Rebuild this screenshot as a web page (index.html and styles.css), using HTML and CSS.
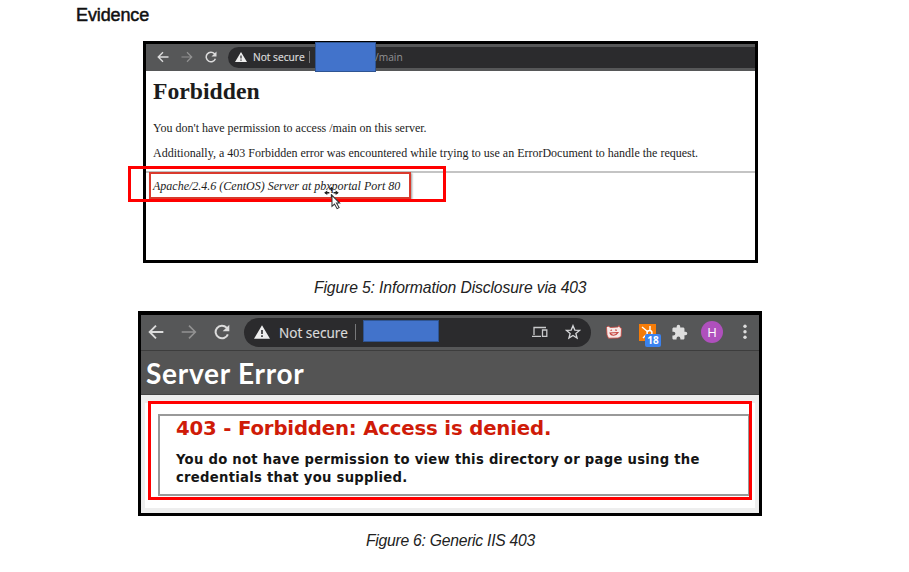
FILE: index.html
```html
<!DOCTYPE html>
<html lang="en">
<head>
<meta charset="utf-8">
<title>Evidence</title>
<link rel="stylesheet" href="styles.css">
</head>
<body>
<svg class="defs" width="0" height="0">
  <symbol id="back" viewBox="0 0 24 24"><path d="M23 12H3M12 2.500 2.500 12l9.500 9.500" fill="none" stroke="currentColor" stroke-width="2.800"/></symbol>
  <symbol id="forward" viewBox="0 0 24 24"><path d="M1 12h20M12 2.500 21.500 12 12 21.500" fill="none" stroke="currentColor" stroke-width="2.400"/></symbol>
  <symbol id="reload" viewBox="0 0 24 24"><path d="M20.800 15.500A9.500 9.500 0 1 1 18.900 5.500L21 7.700" fill="none" stroke="currentColor" stroke-width="3"/><path d="M23 1v10H13z" fill="currentColor"/></symbol>
  <symbol id="warning" viewBox="0 0 24 24"><path fill="currentColor" fill-rule="evenodd" d="M12 2 24 22H0zM10.800 9v6h2.400V9zm0 8v2.500h2.400V17z"/></symbol>
</svg>
<main class="page">
  <h2 class="title">Evidence</h2>

  <section class="shot shot-a">
    <div class="bar bar-a">
      <svg class="ic back"><use href="#back"/></svg>
      <svg class="ic forward"><use href="#forward"/></svg>
      <svg class="ic reload"><use href="#reload"/></svg>
      <div class="address">
        <svg class="ic warning"><use href="#warning"/></svg>
        <span class="secure">Not secure</span>
        <span class="divider"></span>
        <span class="redaction"></span>
        <span class="path">/main</span>
      </div>
    </div>
    <div class="content-a">
      <h1 class="forbidden">Forbidden</h1>
      <p class="denied">You don't have permission to access /main on this server.</p>
      <p class="additional">Additionally, a 403 Forbidden error was encountered while trying to use an ErrorDocument to handle the request.</p>
      <hr class="rule">
      <address class="signature">Apache/2.4.6 (CentOS) Server at pbxportal Port 80</address>
    </div>
    <div class="mark-inner"></div>
    <div class="mark-outer"></div>
    <svg class="cursor" viewBox="0 0 16 22">
      <path d="M7 .5v3.500M7 7v3M1 5.500h4M9 5.500h4" stroke="#222" stroke-width="1.200"/>
      <path d="M0 5.500 3 3.300v4.400zM14 5.500 11 3.300v4.400zM7 0 5 2h4z" fill="#222"/>
      <path d="M7.500 8v10.500l2.400-2.200 2.500 4.400 1.900-1-2.500-4.300h3z" fill="#fff" stroke="#333" stroke-width="1"/>
    </svg>
  </section>
  <p class="caption caption-a">Figure 5: Information Disclosure via 403</p>

  <section class="shot shot-b">
    <div class="bar bar-b">
      <svg class="ic back"><use href="#back"/></svg>
      <svg class="ic forward"><use href="#forward"/></svg>
      <svg class="ic reload"><use href="#reload"/></svg>
      <div class="address">
        <svg class="ic warning"><use href="#warning"/></svg>
        <span class="secure">Not secure</span>
        <span class="divider"></span>
        <span class="redaction"></span>
        <svg class="devices" viewBox="0 0 16 12"><path d="M2 9V1.500h12M0 10.300h9M10.500 4h4.300v6.300h-4.300z" fill="none" stroke="#c9cacc" stroke-width="1.300"/></svg>
        <svg class="star" viewBox="0 0 24 24"><path d="m12 2.500 2.700 6.600 7.100.5-5.500 4.600 1.800 6.900L12 17.300l-6.100 3.800 1.800-6.900-5.500-4.600 7.100-.5z" fill="none" stroke="#d5d6d8" stroke-width="2"/></svg>
      </div>
      <svg class="ext-cat" viewBox="0 0 16 14"><path d="M.5 2.500 2 1l2.500 1.500L12 2l1-1.500 1 2 1.500 1-.4 8-3 1.500-9.600.2L1 10z" fill="#f7e9e7" stroke="#c8443c" stroke-width=".8"/><path d="M4.500 5.500l1.500-.5M9 5l2 .3M4 8c1 3 6 3 8-.5z" fill="none" stroke="#c63f38" stroke-width="1.100"/></svg>
      <div class="ext-hub">
        <svg viewBox="0 0 17 17"><path d="M0 0h17v17H0z" fill="#f57c08"/><path d="m3 3 6 5M11 2v5M7 11l-3 3" stroke="#fff" stroke-width="1.400"/><circle cx="10.500" cy="9" r="2.500" fill="none" stroke="#fff" stroke-width="1.400"/></svg>
        <span class="count">18</span>
      </div>
      <svg class="puzzle" viewBox="0 0 24 24"><path fill="#dedede" d="M20.500 11H19V7c0-1.100-.9-2-2-2h-4V3.500a2.500 2.500 0 0 0-5 0V5H4c-1.100 0-2 .9-2 2v3.800h1.500a2.700 2.700 0 0 1 0 5.400H2V20c0 1.100.9 2 2 2h3.800v-1.500a2.700 2.700 0 0 1 5.400 0V22H17c1.100 0 2-.9 2-2v-4h1.500a2.500 2.500 0 0 0 0-5z"/></svg>
      <span class="avatar">H</span>
      <svg class="dots" viewBox="0 0 4 16"><circle cx="2" cy="2.300" r="1.700"/><circle cx="2" cy="7.800" r="1.700"/><circle cx="2" cy="13.300" r="1.700"/></svg>
    </div>
    <h1 class="server-error">Server Error</h1>
    <div class="content-b">
      <div class="sheet">
        <div class="mark-b">
          <div class="fieldset">
            <h2 class="status">403 - Forbidden: Access is denied.</h2>
            <h3 class="detail">You do not have permission to view this directory or page using the<br>credentials that you supplied.</h3>
          </div>
        </div>
      </div>
    </div>
  </section>
  <p class="caption caption-b">Figure 6: Generic IIS 403</p>
</main>
</body>
</html>
```

FILE: styles.css
```css
* { box-sizing: border-box; }
body { margin: 0; background: #fff; color: #111; font-family: "Liberation Sans", Arial, sans-serif; }
h1, h2, h3, p { margin: 0; font-weight: normal; }
svg { display: block; flex: none; }
.defs { position: absolute; }
.page { width: 909px; height: 572px; overflow: hidden; white-space: nowrap; }
.title { height: 41px; padding: 5px 0 0 76px; font-size: 18px; line-height: 20px; letter-spacing: -0.120px; -webkit-text-stroke: 0.500px #111; }

.shot { position: relative; border: 3px solid #000; }
.shot-a { width: 615px; height: 222px; margin-left: 143px; }
.shot-b { width: 624px; height: 205px; margin-left: 138px; border-width: 4px 3px 3px; }

.bar { display: flex; align-items: center; background: #565758; color: #dcdcdc; font-family: "Open Sans", "Noto Sans", sans-serif; }
.address { display: flex; align-items: center; background: #2b2b2d; }
.bar .forward { color: #929292; }
.bar .warning { color: #eee; }
.divider { background: #77787a; }
.redaction { flex: none; background: #4273cb; border: 1px solid #2f5593; }

.bar-a { height: 27px; padding: 0 0 1px 11px; }
.bar-a .ic { width: 12px; height: 12px; margin-right: 12px; }
.bar-a .address { flex: 1; height: 21px; padding-left: 7px; margin-left: -1px; border-radius: 11px 0 0 11px; }
.bar-a .warning { margin-right: 6px; }
.bar-a .secure { width: 56px; font-size: 10.200px; line-height: 20px; -webkit-text-stroke: 0.200px; }
.bar-a .divider { width: 1px; height: 12px; margin-right: 5px; }
.bar-a .redaction { width: 61px; height: 30px; margin-top: -1px; }
.path { margin-left: -1px; color: #929395; font-size: 10.200px; }

.content-a { color: #1c1c1c; font-family: "Liberation Serif", "Times New Roman", serif; font-size: 12px; }
.forbidden { padding: 6px 0 0 7px; font-size: 23.700px; font-weight: bold; line-height: 28px; height: 49px; }
.denied { height: 25px; padding-left: 7px; line-height: 16px; }
.additional { height: 26px; padding-left: 7px; line-height: 16px; }
.rule { height: 2px; margin: 0; border: 0; background: #c4c4c4; }
.signature { padding: 5px 0 0 7px; line-height: 16px; font-style: italic; }
.mark-inner { position: absolute; left: 3px; top: 128px; width: 262px; height: 27px; border: 2px solid #d93a2d; box-shadow: 1px 1px 2px #999; }
.mark-outer { position: absolute; left: -18px; top: 122px; width: 318px; height: 36px; border: 3px solid #f00; }
.cursor { position: absolute; left: 178px; top: 143px; width: 17px; height: 23px; }

.caption { color: #222; font-size: 15.700px; font-style: italic; line-height: 20px; }
.caption-a { height: 48px; padding: 15px 0 0 314px; letter-spacing: -0.120px; }
.caption-b { padding: 15px 0 0 366px; letter-spacing: -0.250px; }

.bar-b { height: 36px; padding: 0 0 1px 7px; border-bottom: 1px solid #3d3d3d; }
.bar-b .ic { width: 16px; height: 16px; margin-right: 17px; }
.bar-b .address { width: 347px; height: 29px; padding-left: 10px; margin-left: -3px; border-radius: 15px; }
.bar-b .warning { margin-right: 9px; }
.bar-b .secure { width: 76px; font-size: 13.600px; -webkit-text-stroke: 0.200px; }
.bar-b .divider { width: 1px; height: 16px; margin-right: 7px; }
.bar-b .redaction { width: 76px; height: 22px; margin: -2px 93px 0 0; }
.devices { width: 16px; height: 12px; margin-right: 17px; }
.star { width: 16px; height: 16px; }
.ext-cat { width: 16px; height: 14px; margin: 0 17px 0 15px; }
.ext-hub { position: relative; width: 17px; height: 17px; margin-right: 15px; }
.count { position: absolute; left: 6px; top: 10px; width: 16px; height: 13px; border-radius: 2px; background: #3b82ee; color: #fff; font-size: 10px; font-weight: bold; line-height: 13px; text-align: center; }
.puzzle { width: 17px; height: 17px; margin-right: 13px; }
.avatar { width: 22px; height: 22px; border-radius: 50%; background: #af50bd; color: #fff; font-size: 13px; line-height: 22px; text-align: center; margin-right: 20px; }
.dots { width: 4px; height: 16px; fill: #ddd; }

.server-error { height: 44px; padding: 4px 0 0 5px; border-bottom: 1px solid #444; background: #545454; color: #fff; font-family: Lato, sans-serif; font-size: 28px; font-weight: bold; line-height: 36px; letter-spacing: 0.750px; }
.content-b { height: 118px; padding: 0 4px 5px; background: #eee; }
.sheet { height: 113px; padding: 6px 6px 0 3px; background: linear-gradient(#eee 8px, #fff 8px); }
.mark-b { width: 604px; height: 99px; padding: 10px 0 0 7px; border: 3px solid #f00; background: #fff; }
.fieldset { height: 82px; padding: 1px 0 0 16px; border: 2px solid #999; border-right-width: 1px; font-family: "DejaVu Sans", Verdana, sans-serif; }
.status { color: #cf1b08; font-size: 19.700px; font-weight: bold; line-height: 24px; letter-spacing: -0.160px; }
.detail { padding-top: 10px; color: #151515; font-size: 13.200px; font-weight: bold; line-height: 17.500px; letter-spacing: 0.270px; }
```
